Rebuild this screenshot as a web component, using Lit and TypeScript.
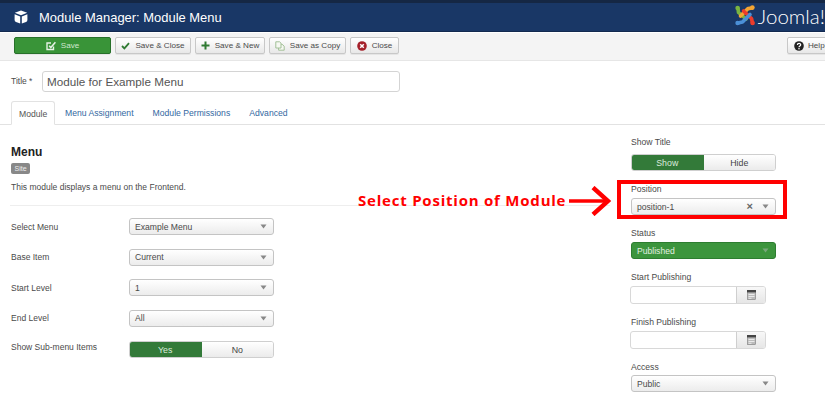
import { LitElement, html, css, svg } from "lit";
import { customElement } from "lit/decorators.js";

const caret = html`<svg class="caret" width="7" height="5" viewBox="0 0 7 5"><path d="M0.5 0.5h6L3.5 4.5z" /></svg>`;

@customElement("app-root")
export class AppRoot extends LitElement {
  static styles = css`
    :host { display: block; width: 825px; height: 402px; overflow: hidden; position: relative; background: #fff;
      font-family: "Liberation Sans", Arial, sans-serif; font-size: 8.5px; color: #4a4a4a; }
    * { box-sizing: border-box; }
    .header { height: 32px; background: #193766; border-top: 3px solid #152744; border-bottom: 1px solid #12294f; display: flex; align-items: center; padding-left: 14px; color: #fff; overflow: hidden; }
    .header h1 { margin: 0 0 0 11px; font-size: 12.95px; font-weight: 400; flex: 1; white-space: nowrap; }
    .brand { display: flex; align-items: center; gap: 3px; margin-top: -2px; }
    .brand svg { margin-top: -1px; margin-left: -1px; }
    .brand span { font-family: Lato, sans-serif; font-weight: 300; font-size: 20.5px; color: #fff; }
    .toolbar { height: 29px; background: #f4f4f4; border-bottom: 1px solid #e6e6e6; border-top: 1px solid #fff; display: flex; align-items: flex-start; padding: 4px 0 0 14px; gap: 4px; }
    .btn { height: 17px; display: flex; align-items: center; justify-content: center; gap: 5px; border: 1px solid #c8c8c8; border-radius: 2px; background: linear-gradient(#ffffff, #e8e8e8); font-size: 8.1px; color: #4a4a4a; white-space: nowrap; box-shadow: 0 1px 0 rgba(0,0,0,.06); }
    .btn.save { width: 97px; background: #399438; border-color: #27702a; color: #cfe6cf; }
    .btn.sc { width: 76px; }
    .btn.sn { width: 70px; }
    .btn.sa { width: 77px; }
    .btn.cl { width: 49px; }
    .btn.help { width: 50px; margin-left: auto; margin-right: -12px; justify-content: flex-start; padding-left: 6px; gap: 4px; }
    .title-row { display: flex; align-items: center; padding: 9px 0 0 11px; height: 31px; }
    .title-row label { width: 31px; font-size: 8.5px; }
    .title-input { width: 358px; height: 21px; border: 1px solid #d4d4d4; border-radius: 3px; padding-left: 4px; display: flex; align-items: center; font-size: 11.7px; color: #555; }
    .tabs { display: flex; margin-top: 9px; height: 24px; padding-left: 11px; border-bottom: 1px solid #e2e2e2; align-items: flex-end; }
    .tab { height: 24px; padding: 8px 9px 0; font-size: 8.65px; color: #33689f; white-space: nowrap; margin-right: 1px; }
    .tab.active { color: #555; background: #fff; border: 1px solid #e2e2e2; border-bottom: 1px solid #fff; border-radius: 3px 3px 0 0; padding: 7px 7px 0; height: 24px; margin-bottom: -1px; width: 44px; }
    .content { display: grid; grid-template-columns: 620px 145px; column-gap: 1px; padding-left: 10px; }
    .left { padding-top: 20px; }
    .left h2 { margin: 0 0 0 1px; font-size: 12px; line-height: 15px; font-weight: 700; color: #222; }
    .badge { display: block; margin: 3px 0 0 1px; height: 11px; width: 19px; background: #888; border-radius: 2px; color: #eee; font-size: 7px; line-height: 11px; text-align: center; }
    .left p { margin: 7px 0 0 1px; font-size: 8.5px; line-height: 12px; }
    .left hr { margin: 12px 0 12px 0; border: 0; border-top: 1px solid #eee; width: 600px; }
    .rows { display: flex; flex-direction: column; padding-left: 1px; }
    .row { display: grid; grid-template-columns: 118px 145px; align-items: center; height: 17px; margin-bottom: 13.5px; }
    .select { width: 145px; height: 17px; border: 1px solid #c4c4c4; border-radius: 3px; background: linear-gradient(#fff, #ececec); display: flex; align-items: center; padding: 0 6px 0 5px; font-size: 8.6px; color: #4a4a4a; gap: 9px; }
    .select .v { flex: 1; }
    .caret path { fill: #888; }
    .toggle { width: 145px; height: 17px; display: grid; grid-template-columns: 1fr 1fr; border-radius: 3px; overflow: hidden; border: 1px solid #cfcfcf; font-size: 8.8px; }
    .toggle div { display: flex; align-items: center; justify-content: center; background: linear-gradient(#fff, #ebebeb); color: #444; }
    .toggle .on { background: #337a39; color: #dcebdc; margin: -1px 0 -1px -1px; }
    .row.sub { margin-top: 1px; align-items: flex-start; }
    .row.sub > div:first-child { padding-top: 1px; }
    .right { padding-top: 11px; }
    .lab { font-size: 8.6px; line-height: 12px; margin-bottom: 3px; }
    .field { margin-bottom: 12px; }
    .field.first .lab { margin-bottom: 6px; }
    .field.last .lab { margin-bottom: 2px; }
    .select.green { background: #3c953d; border-color: #2d7d30; color: #e2efe2; }
    .select.green .caret path { fill: #78a87a; }
    .x { font-size: 11px; color: #666; font-weight: 700; line-height: 1; }
    .date { width: 136px; height: 18px; display: grid; grid-template-columns: 1fr 29px; border: 1px solid #d8d8d8; border-radius: 3px; overflow: hidden; margin-left: -1px; }
    .date .cal { background: linear-gradient(#f8f8f8, #e6e6e6); border-left: 1px solid #cfcfcf; display: flex; align-items: center; justify-content: center; }
    .box { position: absolute; left: 617px; top: 180px; width: 170px; height: 39px; border: 4px solid #f00; }
    .callout { position: absolute; left: 358px; top: 186px; display: flex; align-items: center; gap: 3px; color: #f00; }
    .callout span { font-family: "Open Sans", sans-serif; font-weight: 700; font-size: 15px; letter-spacing: 0.78px; line-height: 20px; white-space: nowrap; margin-bottom: 3px; }
  `;

  private rows = [
    ["Select Menu", "Example Menu"],
    ["Base Item", "Current"],
    ["Start Level", "1"],
    ["End Level", "All"],
  ];

  private cal() {
    return html`<svg width="9" height="10" viewBox="0 0 9 10"><rect x="0.5" y="0.5" width="8" height="9" fill="#bbb" stroke="#777" stroke-width="0.6"/><rect x="0" y="0" width="9" height="2.4" fill="#444"/><path d="M1.5 4.5h6M1.5 6.5h6M1.5 8.3h3" stroke="#eee" stroke-width="0.9"/></svg>`;
  }

  private logo() {
    const arm = (d: string, c: string) => svg`<path d=${d} fill="none" stroke=${c} stroke-width="3.6" stroke-linecap="round" stroke-linejoin="round"/>`;
    return html`<svg width="20" height="21" viewBox="0 0 20 21">
      ${arm("M3 3.5 L3.5 7.5 L11 14", "#7ab441")}
      ${arm("M17 3 L13 3.6 L5.5 11", "#f4a533")}
      ${arm("M17.5 18 L16.5 13.5 L8.5 6", "#ec3c2b")}
      ${arm("M3 18 L7.5 17 L15 9.5", "#4b8fd6")}
      <circle cx="2.6" cy="3" r="2.3" fill="#7ab441"/>
      <circle cx="17.4" cy="2.6" r="2.3" fill="#f4a533"/>
      <circle cx="17.6" cy="18" r="2.3" fill="#ec3c2b"/>
      <circle cx="2.6" cy="18" r="2.3" fill="#4b8fd6"/>
    </svg>`;
  }

  render() {
    return html`
      <div class="header">
        <svg width="14" height="14" viewBox="0 0 14 14"><path d="M7 0.5 L13.2 2.8 L7 5.2 L0.8 2.8z" fill="#fff"/><path d="M0.6 4.2 L6.2 6.4 V13.6 L2 12 Q0.6 11.4 0.6 10z" fill="#fff"/><path d="M13.4 4.2 L7.8 6.4 V13.6 L12 12 Q13.4 11.4 13.4 10z" fill="#fff"/></svg>
        <h1>Module Manager: Module Menu</h1>
        <div class="brand">${this.logo()}<span>Joomla!</span></div>
      </div>
      <div class="toolbar">
        <div class="btn save"><svg width="10" height="10" viewBox="0 0 10 10"><path d="M7.5 5.5V8.5H1V2H5" fill="none" stroke="#e6f2e6" stroke-width="1.4"/><path d="M3.2 4.8 L4.8 6.6 L9.4 1.2" fill="none" stroke="#e6f2e6" stroke-width="1.5"/></svg>Save</div>
        <div class="btn sc"><svg width="9" height="8" viewBox="0 0 9 8"><path d="M1 4 L3.4 6.4 L8 1.2" fill="none" stroke="#2f7a32" stroke-width="1.8"/></svg>Save &amp; Close</div>
        <div class="btn sn"><svg width="9" height="9" viewBox="0 0 9 9"><path d="M4.5 0.5v8M0.5 4.5h8" stroke="#2f7a32" stroke-width="2"/></svg>Save &amp; New</div>
        <div class="btn sa"><svg width="10" height="10" viewBox="0 0 10 10"><path d="M0.8 0.8H4.6L6 2.2V7H0.8z M6 3.2H7L9.2 5.2V9.2H3.6V7" fill="#f6f8f2" stroke="#9bbb8f" stroke-width="0.9"/></svg>Save as Copy</div>
        <div class="btn cl"><svg width="10" height="10" viewBox="0 0 10 10"><circle cx="5" cy="5" r="4.8" fill="#a5202a"/><path d="M3.2 3.2L6.8 6.8M6.8 3.2L3.2 6.8" stroke="#fff" stroke-width="1.5"/></svg>Close</div>
        <div class="btn help"><svg width="10" height="10" viewBox="0 0 10 10"><circle cx="5" cy="5" r="4.8" fill="#222"/><path d="M3.4 3.9C3.4 2 6.7 2 6.7 3.8C6.7 5 5 5 5 6.2" fill="none" stroke="#fff" stroke-width="1.2"/><circle cx="5" cy="7.8" r="0.8" fill="#fff"/></svg>Help</div>
      </div>
      <div class="title-row">
        <label>Title *</label>
        <div class="title-input">Module for Example Menu</div>
      </div>
      <div class="tabs">
        <div class="tab active">Module</div>
        <div class="tab">Menu Assignment</div>
        <div class="tab">Module Permissions</div>
        <div class="tab">Advanced</div>
      </div>
      <div class="content">
        <div class="left">
          <h2>Menu</h2>
          <span class="badge">Site</span>
          <p>This module displays a menu on the Frontend.</p>
          <hr />
          <div class="rows">
            ${this.rows.map(([l, v]) => html`
              <div class="row"><div>${l}</div><div class="select"><span class="v">${v}</span>${caret}</div></div>`)}
            <div class="row sub"><div>Show Sub-menu Items</div><div class="toggle"><div class="on">Yes</div><div>No</div></div></div>
          </div>
        </div>
        <div class="right">
          <div class="field first"><div class="lab">Show Title</div><div class="toggle"><div class="on">Show</div><div>Hide</div></div></div>
          <div class="field"><div class="lab">Position</div><div class="select"><span class="v">position-1</span><span class="x">×</span>${caret}</div></div>
          <div class="field"><div class="lab">Status</div><div class="select green"><span class="v">Published</span>${caret}</div></div>
          <div class="field"><div class="lab">Start Publishing</div><div class="date"><div></div><div class="cal">${this.cal()}</div></div></div>
          <div class="field"><div class="lab">Finish Publishing</div><div class="date"><div></div><div class="cal">${this.cal()}</div></div></div>
          <div class="field last"><div class="lab">Access</div><div class="select"><span class="v">Public</span>${caret}</div></div>
        </div>
      </div>
      <div class="box"></div>
      <div class="callout"><span>Select Position of Module</span>
        <svg width="42" height="30" viewBox="0 0 42 30"><path d="M0 15H38" stroke="#f00" stroke-width="3.6"/><path d="M24 1.5 L39 15 L24 28.5" fill="none" stroke="#f00" stroke-width="4.4"/></svg>
      </div>
    `;
  }
}
